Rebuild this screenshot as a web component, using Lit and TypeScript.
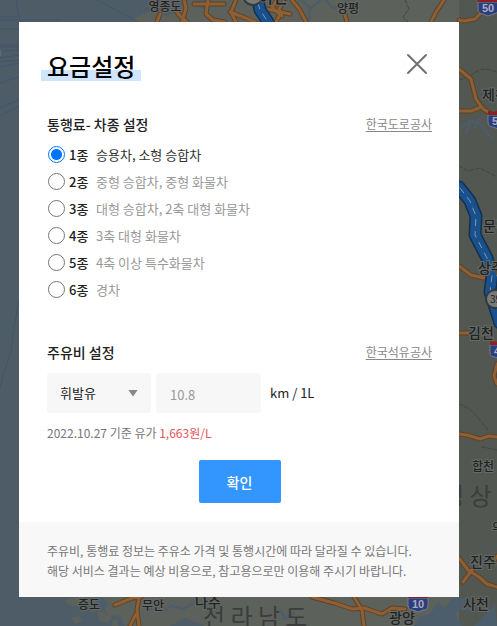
import { LitElement, html, svg, css } from "lit";
import { customElement, state } from "lit/decorators.js";

const vehicles = [
  "승용차, 소형 승합차",
  "중형 승합차, 중형 화물차",
  "대형 승합차, 2축 대형 화물차",
  "3축 대형 화물차",
  "4축 이상 특수화물차",
  "경차",
];

const roads = [
  "M160 14 L157 22 M176 11 L180 16 L187 22 M184 0 L186 8 L182 22",
  "M194 4 H224 M208 0 L206 14 L213 20 L225 22",
  "M236 0 L231 12 L236 22 M230 12 L243 17 L255 22 M277 0 L272 7 L280 15 L276 22",
  "M285 0 L279 9 L282 16 M292 0 L300 10 L306 22 M267 9 L290 14",
  "M345 15 L347 22 M444 0 L436 12 L431 22 M497 7 L482 12 L475 19 L464 21 L459 20",
  "M459 69 L471 79 L476 99 L483 109 L497 117 M459 111 L471 111 L479 108",
  "M459 266 L471 275 L484 278 L494 275 M459 333 H469 M497 364 L494 376 L497 384",
  "M459 434 L467 435 L480 439 L489 436 L497 437",
  "M459 558 L468 570 L479 577 L487 584 L497 587 M472 570 L463 582 M497 556 L492 564",
  "M115 605 L132 598 L141 597 M139 597 L137 610 L139 626 M136 614 L130 626",
  "M312 597 L334 603 L352 609 L364 608 L382 614 L392 608 L405 609 M354 597 L362 610 L364 626",
];

const places: [string, number, number, number][] = [
  ["영종도", 165, 11, 12],
  ["이천", 273, 3, 16],
  ["양평", 348, 13, 12],
  ["제천", 495, 100, 14],
  ["문경", 496, 231, 14],
  ["상주", 491, 273, 14],
  ["김천", 481, 338, 14],
  ["합천", 483, 471, 12],
  ["의령", 503, 532, 12],
  ["진주", 483, 567, 14],
  ["사천", 476, 609, 14],
  ["광양", 402, 623, 14],
  ["나주", 208, 607, 14],
  ["무안", 153, 610, 12],
  ["증도", 89, 609, 12],
];

const shields: [string, number, number][] = [
  ["50", 488, 8],
  ["50", 498, 121],
  ["45", 500, 351],
  ["10", 418, 604],
];

@customElement("route-map")
export class RouteMap extends LitElement {
  static styles = css`
    :host {
      display: block;
      overflow: hidden;
      background: #4e5c67;
    }
    svg {
      display: block;
      width: 100%;
      height: 100%;
      font-family: "Noto Sans CJK KR", sans-serif;
    }
    .line {
      fill: none;
      stroke-linejoin: round;
      stroke-linecap: round;
    }
    .place {
      fill: #202222;
      stroke: #666a66;
      stroke-width: 2px;
      paint-order: stroke;
      font-weight: 500;
      text-anchor: middle;
    }
    .province {
      fill: #3b3d3c;
      font-size: 24px;
      font-weight: 400;
    }
    .number {
      fill: #a8adbb;
      font: bold 11px "Liberation Sans", sans-serif;
      text-anchor: middle;
    }
  `;

  render() {
    return html`
      <svg viewBox="0 0 497 626" preserveAspectRatio="xMinYMin slice" aria-hidden="true">
        <path fill="#5d615c" d="M146 13 L155 10 L166 16 L176 12 L184 2 L190 0 H497 V626 H205 L185 618 L170 626 H125 L119 615 L108 617 L105 609 L98 612 L88 601 L97 597 L114 597 V400 H200 V30 H146 L134 18 L140 16 Z" />
        <path fill="#535751" d="M459 0 H497 V626 H459 Z" />
        <g fill="#5d615c">
          <path d="M65 600 l10 -3 h10 l-2 5 -7 4 -8 -1z M97 613 l6 -3 3 5 6 3 -4 5 -8 -2z M72 618 l7 -2 3 5 -7 3z M112 621 l5 -2 1 7 h-6z M88 607 l9 2 -4 4z" />
        </g>
        <g fill="#4c5d6b">
          <path d="M414 626 L420 616 L430 614 L438 602 L444 608 L452 599 L459 596 L461 610 L455 614 L462 626 Z" />
          <path d="M459 599 L466 597 L473 601 L474 612 L461 610 Z M495 604 L482 618 L474 626 H497 Z M195 0 h16 l-8 9 -8 -3z M97 597 h6 l5 8 -5 7 -7 -6z" />
        </g>
        <g class="line" stroke="#40566a">
          <path d="M0 17 H19 V22 M16 0 L19 18 M0 20 H60 M0 29 L19 29 M0 45 H19 M0 47 H19 M0 51 L19 50 M0 58 L19 55 M0 62 L19 60 M0 67 L19 63 M0 83 L19 77 M0 108 L19 100 M0 116 L19 106 M19 300 L13 334 L11 352 L4 373 L0 388 M97 0 L135 20" />
          <path stroke="#4a5d6d" stroke-width="2" d="M302 0 L310 8 L309 20 M311 8 L321 0 M326 0 L333 9 L342 5 L352 4 M345 0 L349 4 M162 4 L175 11 M459 129 L470 121 L479 123 L484 130 L493 139 M466 133 L471 121 M475 127 L479 119 M147 612 L153 607 L164 611 L171 606 L184 609 L194 602 M281 610 L285 619 L294 613" />
          <path stroke="#4a5d6d" d="M497 545 L488 550 L481 545 L473 548" />
        </g>
        <g class="line" stroke="#41463f" stroke-dasharray="4 2">
          <path d="M405 0 L409 9 L403 17 L408 22 M459 80 L466 78 L474 73 L482 69 L490 70 L497 72 M459 166 L468 171 L480 168 L497 177 M459 404 L470 409 L478 418 L488 430 M497 450 L482 447" />
        </g>
        ${roads.map((d) => svg`<path class="line" d=${d} stroke="#5b4329" stroke-width="5" />`)}
        ${roads.map((d) => svg`<path class="line" d=${d} stroke="#8f5e33" stroke-width="3" />`)}
        <g class="line">
          <path stroke="#13304f" stroke-width="13" d="M258 0 L260 10 L268 22 V30 M459 187 L470 201 L476 216 L475 235 L487 258 L492 276 L490 292 L500 323" />
          <path stroke="#19518e" stroke-width="10" d="M258 0 L260 10 L268 22 V30 M459 187 L470 201 L476 216 L475 235 L487 258 L492 276 L490 292 L500 323" />
          <path stroke="#8499ad" stroke-dasharray="6 6" d="M258 3 L260 10 L268 22 M460 188 L470 201 L476 216 L475 235 L487 258 L492 276 L490 292" />
        </g>
        <circle cx="253" cy="-5" r="10" fill="#777b78" stroke="#353b3d" stroke-width="2" />
        <text class="province" x="203" y="626">전 라 남 도</text>
        <text class="province" x="442" y="505">경 상</text>
        ${places.map(
          ([name, x, y, size]) =>
            svg`<text class="place" x=${x} y=${y} font-size=${size}>${name}</text>`
        )}
        ${shields.map(
          ([n, x, y]) => svg`
            <path fill="#2c3c80" stroke="#777d84" d="M${x - 10} ${y - 6} H${x + 10} V${y + 1} Q${x + 10} ${y + 6} ${x + 5} ${y + 6} L${x} ${y + 8} L${x - 5} ${y + 6} Q${x - 10} ${y + 6} ${x - 10} ${y + 1} Z" />
            <path fill="#8b1e1e" d="M${x - 10} ${y - 10} L${x - 4} ${y - 9} L${x} ${y - 11} L${x + 4} ${y - 9} L${x + 10} ${y - 10} V${y - 6} H${x - 10} Z" />
            <text class="number" x=${x} y=${y + 4}>${n}</text>`
        )}
        <circle cx="495" cy="299" r="9" fill="#777a78" stroke="#343a3b" stroke-width="2" />
        <text x="490" y="303" font-size="10" fill="#222">39</text>
        <circle cx="-3" cy="53" r="4" fill="#414b59" stroke="#68727a" />
      </svg>
    `;
  }
}

@customElement("app-root")
export class AppRoot extends LitElement {
  @state() private selected = 0;

  static styles = css`
    :host {
      display: block;
      position: relative;
      font-family: "Noto Sans CJK KR", sans-serif;
      font-size: 13px;
      line-height: 20px;
      color: #222;
    }
    * {
      box-sizing: border-box;
    }
    .map {
      position: absolute;
      inset: 0;
    }
    .page {
      display: flow-root;
      min-height: 100vh;
      position: relative;
    }
    .dialog {
      margin: 22px 38px 29px 19px;
      background: #fff;
    }
    .header {
      display: flex;
      align-items: flex-start;
      justify-content: space-between;
      padding: 26px 30px 30px 22px;
    }
    h1 {
      margin: 0;
      padding: 0 6px;
      font-size: 24px;
      line-height: 36px;
      font-weight: 500;
      color: #000;
      background: linear-gradient(#cfe4ff, #cfe4ff) 0 22px / 100% 11px no-repeat;
    }
    .close {
      display: block;
      margin: 4px 0 0;
      padding: 0;
      border: 0;
      background: none;
      cursor: pointer;
    }
    .close svg {
      display: block;
      width: 24px;
      height: 24px;
      fill: none;
      stroke: #707070;
      stroke-width: 2;
      stroke-linecap: round;
    }
    .section {
      padding: 0 27px 0 28px;
    }
    .heading {
      display: flex;
      justify-content: space-between;
      align-items: center;
    }
    h2 {
      margin: 0;
      font-size: 14px;
      line-height: 20px;
      font-weight: 500;
    }
    .source {
      font-size: 12px;
      color: #888;
      text-underline-offset: 2px;
    }
    fieldset {
      margin: 7px 0 39px;
      padding: 0;
      border: 0;
      min-width: 0;
    }
    .option {
      display: flex;
      align-items: center;
      height: 27px;
      cursor: pointer;
    }
    .option input {
      appearance: none;
      flex: none;
      width: 17px;
      height: 17px;
      margin: 0 4px 0 1px;
      border: 1px solid #767676;
      border-radius: 50%;
      background: #fff;
    }
    .option input:checked {
      border-color: #0075ff;
      background: radial-gradient(circle, #0075ff 5px, #fff 6px);
    }
    .kind {
      width: 27px;
      font-weight: 500;
    }
    .detail {
      color: #999;
    }
    .checked .detail {
      color: #333;
    }
    .fuel {
      display: flex;
      align-items: center;
      gap: 5px;
      margin-top: 11px;
    }
    .picker {
      display: grid;
      align-items: center;
      width: 104px;
    }
    .picker > * {
      grid-area: 1 / 1;
    }
    .arrow {
      justify-self: end;
      width: 10px;
      height: 7px;
      margin-right: 13px;
      background: #888;
      clip-path: polygon(0 0, 100% 0, 50% 100%);
      pointer-events: none;
    }
    select,
    .economy {
      appearance: none;
      height: 40px;
      margin: 0;
      padding: 0 13px;
      border: 0;
      border-radius: 3px;
      background: #f7f7f7;
      color: #222;
      font: inherit;
    }
    select {
      width: 100%;
    }
    .economy {
      width: 105px;
      padding: 3px 14px 0;
      color: #999;
    }
    .unit {
      margin-left: 4px;
    }
    .price {
      margin: 10px 0 0;
      font-size: 12px;
      color: #777;
    }
    .amount {
      color: #e05555;
    }
    .confirm {
      display: block;
      width: 82px;
      height: 43px;
      margin: 17px auto 19px;
      padding: 0;
      border: 0;
      border-radius: 2px;
      background: #3396ff;
      color: #fff;
      font: inherit;
      font-size: 14px;
      font-weight: 500;
      cursor: pointer;
    }
    .notice {
      padding: 19px 27px 16px 28px;
      background: #f8f8f8;
      font-size: 12px;
      color: #777;
    }
    .notice p {
      margin: 0;
    }
  `;

  render() {
    return html`
      <route-map class="map"></route-map>
      <div class="page">
        <div class="dialog" role="dialog" aria-labelledby="title">
          <header class="header">
            <h1 id="title">요금설정</h1>
            <button class="close" type="button" aria-label="닫기">
              <svg viewBox="0 0 24 24"><path d="M3 3 L21 21 M21 3 L3 21" /></svg>
            </button>
          </header>
          <section class="section">
            <div class="heading">
              <h2 id="toll">통행료- 차종 설정</h2>
              <a class="source" href="#">한국도로공사</a>
            </div>
            <fieldset aria-labelledby="toll">
              ${vehicles.map(
                (detail, i) => html`
                  <label class="option ${i === this.selected ? "checked" : ""}">
                    <input
                      type="radio"
                      name="vehicle"
                      .checked=${i === this.selected}
                      @change=${() => (this.selected = i)}
                    />
                    <span class="kind">${i + 1}종</span>
                    <span class="detail">${detail}</span>
                  </label>
                `
              )}
            </fieldset>
          </section>
          <section class="section">
            <div class="heading">
              <h2>주유비 설정</h2>
              <a class="source" href="#">한국석유공사</a>
            </div>
            <div class="fuel">
              <div class="picker">
                <select aria-label="유종">
                  <option>휘발유</option>
                  <option>경유</option>
                  <option>LPG</option>
                </select>
                <span class="arrow"></span>
              </div>
              <input class="economy" id="economy" type="text" inputmode="decimal" value="10.8" />
              <label class="unit" for="economy">km / 1L</label>
            </div>
            <p class="price">2022.10.27 기준 유가 <span class="amount">1,663원/L</span></p>
            <button class="confirm" type="button">확인</button>
          </section>
          <footer class="notice">
            <p>주유비, 통행료 정보는 주유소 가격 및 통행시간에 따라 달라질 수 있습니다.</p>
            <p>해당 서비스 결과는 예상 비용으로, 참고용으로만 이용해 주시기 바랍니다.</p>
          </footer>
        </div>
      </div>
    `;
  }
}
